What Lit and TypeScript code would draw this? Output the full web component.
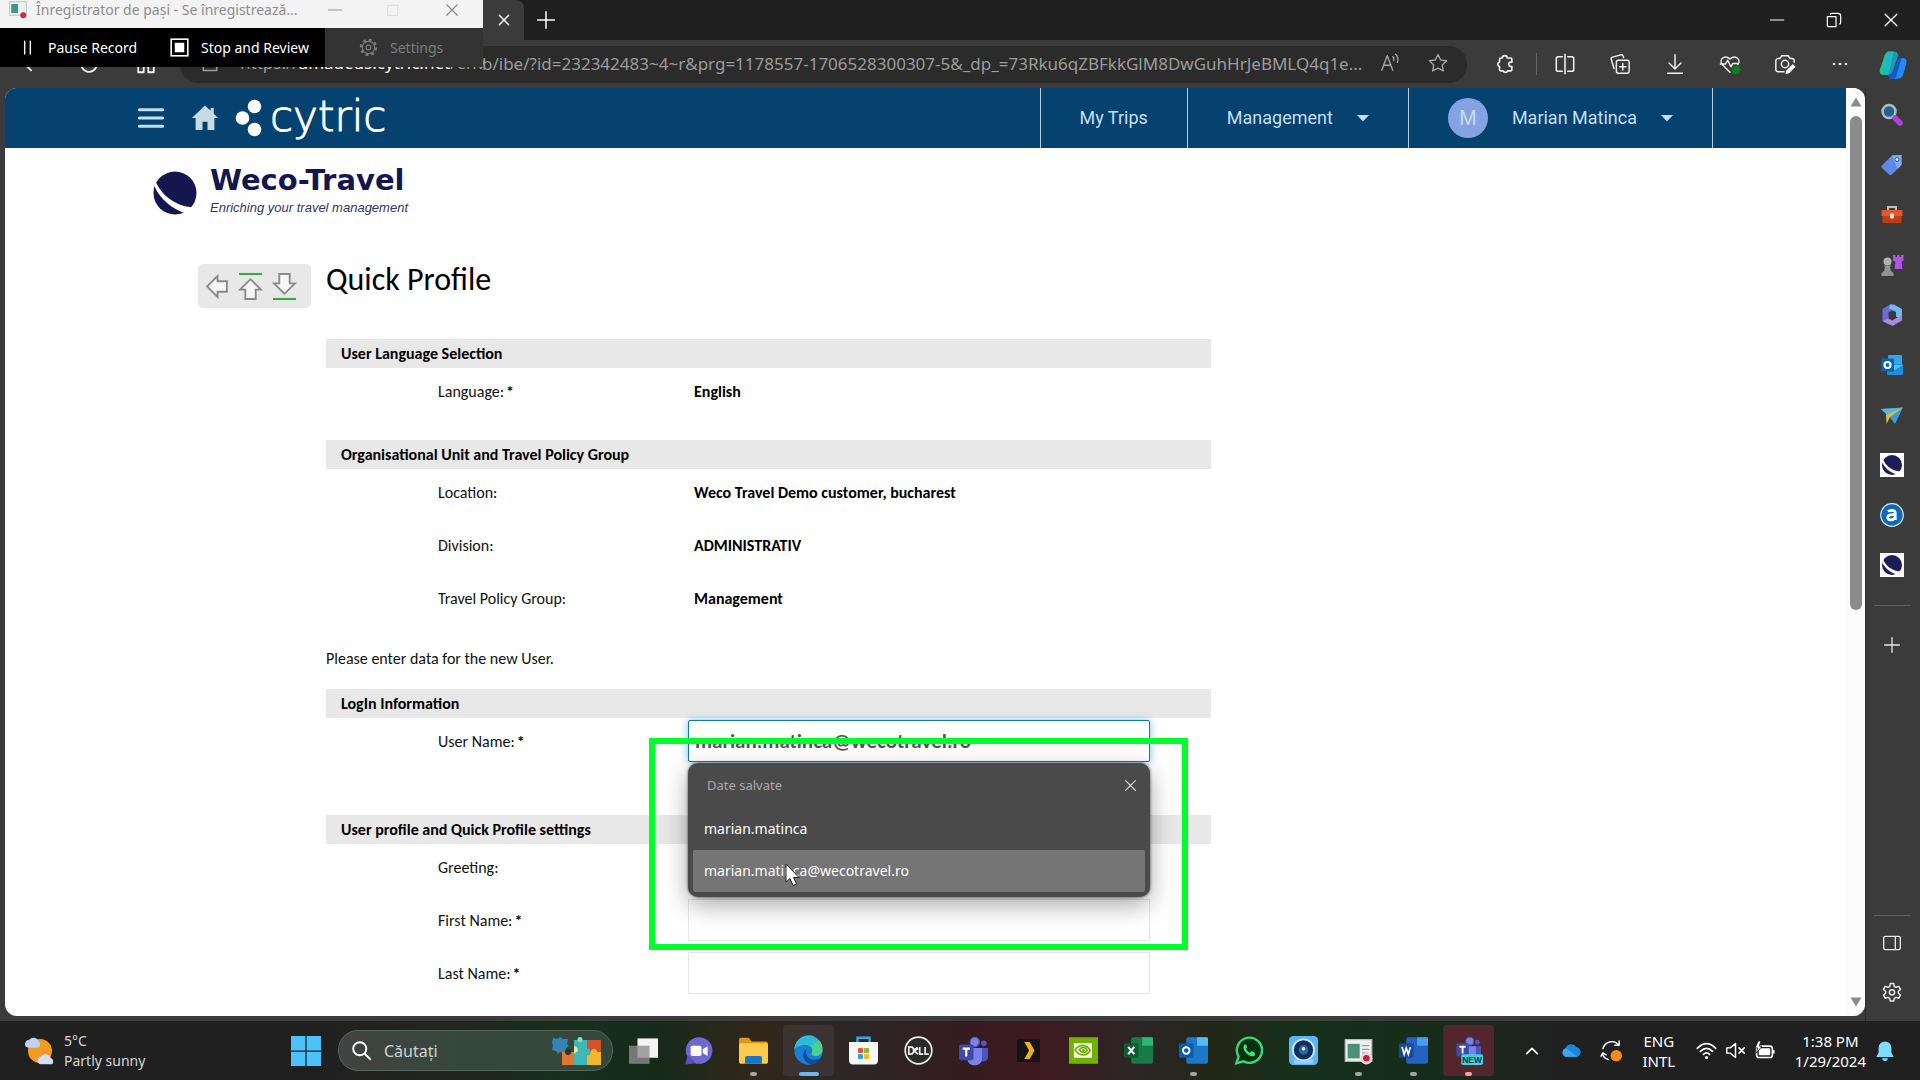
import { LitElement, html, css, svg, nothing } from "lit";
import type { TemplateResult } from "lit";
import { customElement } from "lit/decorators.js";
import { classMap } from "lit/directives/class-map.js";

type Shape = TemplateResult;

const icon = (size: number, shape: Shape, box = 24) =>
  html`<svg class="ico" width=${size} height=${size} viewBox="0 0 ${box} ${box}" aria-hidden="true">${shape}</svg>`;

const line = (d: string, w = 1.5) =>
  svg`<path d=${d} fill="none" stroke="currentColor" stroke-width=${w} stroke-linecap="round" stroke-linejoin="round"/>`;

const cross = line("M5 5L19 19M19 5L5 19", 1.6);
const gear = svg`${line("M10.3 2.5h3.4l.6 2.8 1.7 1 2.8-.9 1.7 3-2.1 1.9v2l2.1 1.9-1.7 3-2.8-.9-1.7 1-.6 2.8h-3.4l-.6-2.8-1.7-1-2.8.9-1.7-3 2.1-1.9v-2L3.5 8.400l1.700-3 2.800.9 1.700-1z", 1.5)}
  <circle cx="12" cy="11.300" r="2.600" fill="none" stroke="currentColor" stroke-width="1.500"/>`;
const gearFine = svg`<circle cx="12" cy="12" r="9.500" fill="none" stroke="currentColor" stroke-width="3" stroke-dasharray="3.700 3.760"/>
  <circle cx="12" cy="12" r="7.800" fill="none" stroke="currentColor" stroke-width="1.400"/>
  <circle cx="12" cy="12" r="3" fill="none" stroke="currentColor" stroke-width="1.400"/>`;

const globe = svg`<circle cx="22" cy="22" r="21.500" fill="#14164f"/>
  <path d="M2 9C8 24 22 35 40 36.500L35 43C19 39 6 27 0 13z" fill="#fff"/>
  <path d="M1.500 15C6 28 17 38 30 42C15 46 -2 34 1.500 15z" fill="#14164f"/>`;
const globeTile = svg`<rect width="24" height="24" fill="#fff"/><circle cx="12" cy="12" r="10" fill="#1b1c58"/>
  <path d="M2.500 5.500C6 13 12 18.500 21.500 18.500L18.500 22C11 20.500 4 14.500 1.500 8z" fill="#fff"/>`;

const glyphs = {
  readAloud: svg`${line("M3 20L9 4L15 20M5.300 14.500H12.700", 1.500)}${line("M15 5c1.500 1.200 1.500 3 1 4.500M18 2.500c3 2.500 3 6 2 9", 1.400)}`,
  star: line("M12 2.800L14.900 8.700L21.400 9.600L16.700 14.200L17.800 20.700L12 17.600L6.200 20.700L7.300 14.200L2.600 9.600L9.100 8.700Z"),
  puzzle: line("M9 5.500a2.700 2.700 0 0 1 5.400 0H18a1.500 1.500 0 0 1 1.500 1.500v3h-1a2.400 2.400 0 0 0 0 4.800h1V18a1.500 1.500 0 0 1-1.500 1.500h-3a2.700 2.700 0 0 1-5 0H7.500A1.500 1.500 0 0 1 6 18v-3.200a2.600 2.600 0 0 1 0-5V7a1.500 1.500 0 0 1 1.500-1.500z", 1.800),
  split: line("M12 1.500V22.500M9 4H4.500A2 2 0 0 0 2.500 6V18A2 2 0 0 0 4.500 20H9M15 4h4.500a2 2 0 0 1 2 2V18a2 2 0 0 1-2 2H15", 1.700),
  collections: line("M10 8h10a2 2 0 0 1 2 2v10a2 2 0 0 1-2 2H10a2 2 0 0 1-2-2V10a2 2 0 0 1 2-2zM15 11.500v7M11.500 15h7M5.500 17L2.500 7A2 2 0 0 1 3.800 4.500L13 2a2 2 0 0 1 2.400 1.400L16 5", 1.600),
  download: line("M12 2V17M5.500 11L12 17.500L18.500 11M4 22H20", 1.600),
  heart: svg`${line("M12 21L3.500 12.500C-.5 8 5.500 1 12 6.500C18.500 1 24.500 8 20.500 12.500M1.500 12H7L9.500 8L13 15L15 11.500H20", 1.600)}<circle cx="18.500" cy="18.500" r="5" fill="#0f7b1f"/>`,
  camera: svg`${line("M11 20.500H4.500A2.500 2.500 0 0 1 2 18V8.500A2.500 2.500 0 0 1 4.500 6H6.500L8.500 3h7l2 3h2A2.500 2.500 0 0 1 22 8.500V10", 1.600)}<circle cx="12" cy="12" r="4" fill="none" stroke="currentColor" stroke-width="1.600"/><path d="M12.500 23l1-4 7-7 3 3-7 7z" fill="#fff"/>`,
  dots: svg`<circle cx="4" cy="12" r="1.800" fill="currentColor"/><circle cx="12" cy="12" r="1.800" fill="currentColor"/><circle cx="20" cy="12" r="1.800" fill="currentColor"/>`,
  copilot: svg`<path d="M13 2h-3C7 2 6 4 5 8L2.500 15C1.500 18 2.500 20 5 20H9z" fill="#25c48e"/><path d="M8 2h5c2 0 3 1 3.500 3L13 15c-1 3.500-2 5-4 5H5z" fill="#19b5dc" opacity=".75"/><path d="M17 7h3c2.500 0 3.500 2 2.500 5l-2 7c-1 3-2 4-5 4h-4c-1.500 0-2.500-1-3-3h1c2 0 3-1.500 4-5z" fill="#2589f5"/><path d="M17 7h2l-4 14c-1 2-2 2-3.500 2-1.500 0-2.500-1-3-3h1c2 0 3-1.500 4-5z" fill="#1556c9"/>`,
  back: line("M20 12H4M11 5L4 12L11 19", 2),
  refresh: line("M20.500 12a8.500 8.500 0 1 1-2.500-6M18.500 2v4.500H14", 2),
  home: line("M3.500 10L12 3l8.500 7V21H14.500V14.500H9.500V21H3.500z", 2),
  lock: line("M4 10H20V21H4zM8 10V7a4 4 0 0 1 8 0v3", 1.800),
};

const sideIcons: { label: string; shape: Shape }[] = [
  { label: "Search", shape: svg`<circle cx="9" cy="8.500" r="6.500" fill="#26618c" stroke="#a9bfc4" stroke-width="2.500"/><path d="M15 15l5 5" stroke="#b13fe0" stroke-width="5.500" stroke-linecap="round"/>` },
  { label: "Shopping", shape: svg`<path d="M2 12.500L12 2.500l9.500-.5v10L12 21.500c-1 .8-2 .8-3 0L2 15c-1-1-1-1.500 0-2.500z" fill="#5b8ae8"/><path d="M12 2.500l9.500-.5v10l-4 4z" fill="#83abef"/><circle cx="17" cy="6.500" r="2" fill="#d9ecff" stroke="#35538a"/>` },
  { label: "Tools", shape: svg`<path d="M8 7V4h8v3" fill="none" stroke="#b7c0c4" stroke-width="2"/><path d="M1.500 7h21v6h-21z" fill="#e2582a"/><path d="M2.500 13h19v7h-19z" fill="#c23c13"/><rect x="10" y="10.500" width="4" height="5" rx="1" fill="#e3e3e3"/>` },
  { label: "Games", shape: svg`<path d="M13 2h2.500v2H17V2h2.500v2H21V2h2.500v5.500l-2 1.500 1 7h-8l1-7-2.500-1.500z" fill="#b053e8"/><circle cx="7.500" cy="8.500" r="4" fill="#b0b0b0"/><path d="M3.500 12.500h8l-1.500 1.500 1 4 2.500 2v3H1.500v-3l2.500-2 1-4z" fill="#929292"/>` },
  { label: "Microsoft 365", shape: svg`<path d="M11 1L2.500 6v12l6 3.500V9.500l7-4z" fill="#6c6bdc"/><path d="M10 1.500h4l8 4.500v11l-6-3.500V9L9 5.500z" fill="#71b8ec"/><path d="M8.500 15.500l3.500 2L22 12v5.500l-9.500 5.500L2.500 18z" fill="#a78bd9"/>` },
  { label: "Outlook", shape: svg`<rect x="8" y="2" width="14" height="10" rx="1" fill="#35a5ea"/><rect x="7" y="11" width="16" height="11" rx="1" fill="#1e8fd8"/><path d="M23 12l-8 5-8-5" fill="#52c1f3"/><rect x="1" y="5.500" width="13" height="13" rx="1.500" fill="#0a62b8"/><circle cx="7.500" cy="12" r="3" fill="none" stroke="#fff" stroke-width="2.200"/>` },
  { label: "Drop", shape: svg`<path d="M1 6L23 4.500 15 21 9.500 14z" fill="#3c9ade"/><path d="M1 6L23 4.500 7 12z" fill="#55b6d9"/><path d="M6 12L23 4.500 10 14 6.500 21z" fill="#e8b637"/>` },
  { label: "Weco Travel", shape: globeTile },
  { label: "Amadeus", shape: svg`<circle cx="12" cy="12" r="11.300" fill="#0e69b8" stroke="#d8ecfa" stroke-width="1.200"/><path d="M8 8.500c2-1.800 7.300-1.800 7.300 1.500V17M15 11.800c-4-.5-7.300.2-7.300 2.600 0 3.200 5.500 3.200 7.300.4" fill="none" stroke="#fff" stroke-width="2.700"/>` },
  { label: "Weco Travel 2", shape: globeTile },
];

interface Task { label: string; shape: Shape; run?: "dot" | "wide" | "red"; lit?: "edge" | "teams" }
const teamsBody = svg`<circle cx="13" cy="5" r="3.800" fill="#7b83eb" stroke="#5059c9"/><circle cx="20.500" cy="6" r="2.300" fill="#5059c9"/><path d="M16 10h8v7c0 5-6 5-8 2z" fill="#4b53bc"/><path d="M6 10h13v9c0 7-12 7-12 0z" fill="#7b83eb"/><rect x="0" y="7" width="12" height="13" rx="1.500" fill="#4048a8"/><path d="M3 10.500h6M6 10.500V17" stroke="#fff" stroke-width="1.800"/>`;
const office = (main: string, light: string, badge: string, mark: Shape) =>
  svg`<rect x="6" y="1" width="18" height="22" rx="1.500" fill=${main}/><path d="M15 1h8q1 0 1 1v6h-9z" fill=${light}/><rect x="0" y="6" width="12" height="12" rx="1.200" fill=${badge}/>${mark}`;
const tasks: Task[] = [
  { label: "Task view", shape: svg`<rect x="7" y="2" width="17" height="16" fill="#f4f4f4"/><rect x="0" y="8" width="17" height="15" fill="#8d8d8d" opacity=".8"/>` },
  { label: "Chat", shape: svg`<circle cx="12.500" cy="12" r="11" fill="#7068cf"/><path d="M1 23.500l2-8 7 7z" fill="#5a50b8"/><rect x="5.500" y="8" width="9" height="8.500" rx="1.500" fill="#fff"/><path d="M15.500 11l4-2.500v8l-4-2.500z" fill="#fff"/>` },
  { label: "File Explorer", run: "dot", shape: svg`<path d="M0 3q0-1.500 1.500-1.500H8l2.500 3H22q2 0 2 2V10H0z" fill="#d99a1c"/><rect x="0" y="6" width="24" height="17" rx="1.500" fill="#fccb4b"/><path d="M5 23v-5q0-1.500 1.500-1.500h11q1.500 0 1.500 1.500v5z" fill="#1a74c8"/>` },
  { label: "Edge", run: "wide", lit: "edge", shape: svg`<circle cx="12" cy="12" r="11.700" fill="#1a7fd4"/><path d="M.4 10.500C2-3.500 22-3 23.600 9.500c.6 5-2.600 7.500-6.600 7-2.500-.3-3-1.700-2-3.500C16.500 8 8 4.500.4 10.500z" fill="#4fcf8e"/><path d="M.4 10.500C2-2 17-3.500 20 4c-1.500 2-4 3-6.500 4C10 6 4.500 6.500.4 10.500z" fill="#2cb9dc"/><path d="M9 11.500C5.500 16 9 23.500 15 23.300c3.500-.2 6.500-2.800 7.500-5.300-6.500 3.500-13.500.5-12.500-6 0-.8-.5-1-1-.5z" fill="#0d4f9e"/>` },
  { label: "Store", shape: svg`<path d="M7 5V1.500h10V5" fill="none" stroke="#35a9e8" stroke-width="2"/><path d="M0 5h24v15q0 3.500-3.500 3.500h-17Q0 23.500 0 20z" fill="#f7f7f7"/><path d="M7.500 10h4v4h-4z" fill="#e8502b"/><path d="M12.500 10h4v4h-4z" fill="#7db928"/><path d="M7.500 15h4v4h-4z" fill="#2a9fe0"/><path d="M12.500 15h4v4h-4z" fill="#f8b917"/>` },
  { label: "Dell", shape: svg`<circle cx="12" cy="12" r="11" fill="#2a2a2a" stroke="#f0f0f0" stroke-width="1.400"/><path d="M4 9v6h1.300Q8 15 8 12T5.300 9zM11.300 9.500L8.600 11.300v1.200l3 2.500M9 12l2.700-1.600M13 9v6h3M17.500 9v6H20.500" fill="none" stroke="#f0f0f0" stroke-width="1.400"/>` },
  { label: "Teams", shape: teamsBody },
  { label: "Plex", shape: svg`<rect x="2.500" y="2.500" width="19" height="19" fill="#141414"/><path d="M8.500 5h4.500l4 7-4 7H8.500l4-7z" fill="#f2b01e"/>` },
  { label: "NVIDIA", shape: svg`<rect x="0" y="1" width="24" height="22" fill="#74b000"/><rect x="4" y="6" width="15" height="12" fill="#f3f7ea"/><path d="M5 11.500c3.500-5 9.500-5 12.500.5-3 5-9 5-12.500-.5zM8.500 11.500c2-3 5.500-2.500 6.500.5-1.500 2.500-5 2-6.500-.5z" fill="none" stroke="#74b000" stroke-width="1.400"/><circle cx="12" cy="12" r="1.200" fill="#74b000"/>` },
  { label: "Excel", shape: office("#1a7a47", "#2fb573", "#0f5c33", svg`<path d="M3.500 9l5 6M8.500 9l-5 6" stroke="#fff" stroke-width="1.700"/>`) },
  { label: "Outlook", run: "dot", shape: office("#1c78c8", "#55bdf2", "#0d5bab", svg`<circle cx="6" cy="12" r="2.700" fill="none" stroke="#fff" stroke-width="1.600"/>`) },
  { label: "WhatsApp", shape: svg`<path d="M2 22.500l1.800-5.500A10.400 10.400 0 1 1 8 21z" fill="#07320f" stroke="#3fd374" stroke-width="2"/><path d="M8.500 7c-3 4 4 11.500 8.500 9.500l.5-2.500-3-1.500-1.300 1.300c-1-.3-3-2.300-3.300-3.300L11 9.300 10 7z" fill="#49de80"/>` },
  { label: "Assistant", shape: svg`<rect width="24" height="24" rx="3.500" fill="#5ab4f6"/><circle cx="12" cy="11.500" r="9.500" fill="#cfe8ff"/><circle cx="12" cy="11.500" r="8" fill="#102f5a"/><circle cx="12" cy="11.500" r="4" fill="#2b649e"/><circle cx="12" cy="10.500" r="1.500" fill="#dff0ff"/><path d="M4 19q8 3.500 16 0v4H4z" fill="#8ed0ff"/>` },
  { label: "Steps Recorder", run: "dot", shape: svg`<rect x="1" y="3" width="22" height="18" fill="#efefef" stroke="#b9b9b9"/><rect x="3" y="6.500" width="10" height="12" fill="#4a8f77"/><path d="M15 8h6M15 11h6M15 14h5" stroke="#9a9a9a"/><circle cx="18.500" cy="18.500" r="5" fill="#f2d7da"/><circle cx="18.500" cy="18.500" r="2.700" fill="#cb1d35"/>` },
  { label: "Word", run: "dot", shape: office("#2362c0", "#4a9ced", "#174a9c", svg`<path d="M2.500 9l1.800 6L6 10l1.700 5 1.800-6" fill="none" stroke="#fff" stroke-width="1.400"/>`) },
  { label: "Teams new", run: "red", lit: "teams", shape: svg`<g transform="translate(2 0) scale(.85)">${teamsBody}</g><rect x="6" y="15" width="18" height="9" rx="1.500" fill="#3fd2e0"/><text x="15" y="22.300" class="newtag">NEW</text>` },
];

interface Section { title: string; rows: { label: string; req?: boolean; value?: string; field?: string }[] }
const sections: Section[] = [
  { title: "User Language Selection", rows: [{ label: "Language:", req: true, value: "English" }] },
  { title: "Organisational Unit and Travel Policy Group", rows: [
    { label: "Location:", value: "Weco Travel Demo customer, bucharest" },
    { label: "Division:", value: "ADMINISTRATIV" },
    { label: "Travel Policy Group:", value: "Management" },
  ] },
  { title: "LogIn Information", rows: [{ label: "User Name:", req: true, field: "user" }] },
  { title: "User profile and Quick Profile settings", rows: [
    { label: "Greeting:", field: "greeting" },
    { label: "First Name:", req: true, field: "first" },
    { label: "Last Name:", req: true, field: "last" },
  ] },
];

@customElement("app-root")
export class AppRoot extends LitElement {
  static styles = css`
    :host { display: block; --ui: "Noto Sans", "Open Sans", sans-serif; --form: Carlito, Lato, sans-serif; }
    * { box-sizing: border-box; }
    button, input, select { font: inherit; color: inherit; border: 0; background: none; padding: 0; margin: 0; }
    a { color: inherit; text-decoration: none; }
    .ico { display: block; flex: none; overflow: visible; }
    .desk { position: relative; display: grid; grid-template-rows: 40px 48px minmax(0, 1fr) auto; height: 100vh; overflow: hidden; background: #3b3b3b; color: #e8e8e8; font: 16px/20px var(--ui); }
    .ib { display: grid; place-items: center; flex: none; }

    .tabs { display: flex; align-items: stretch; background: #1f1f1f; }
    .tab { width: 524px; padding-right: 12px; display: flex; align-items: center; justify-content: flex-end; background: #3b3b3b; border-radius: 0 8px 0 0; color: #fff; }
    .newtab { width: 44px; color: #fff; }
    .winctl { margin-left: auto; display: flex; padding-right: 1px; color: #fff; }
    .winctl .ib { width: 57px; }

    .tools { display: flex; align-items: center; color: #f0f0f0; }
    .nav { display: flex; width: 180px; padding-left: 3px; }
    .nav .ib { width: 57px; }
    .address { flex: 1; display: flex; align-items: center; height: 37px; padding: 0 5px 2px 20px; border-radius: 18px; background: #2b2b2b; color: #9c9c9c; font-size: 17px; }
    .host { width: 262px; padding-left: 20px; white-space: nowrap; flex: none; }
    .host b { font-weight: 400; color: #fff; }
    .url { flex: 1; min-width: 0; text-overflow: ellipsis; height: 30px; }
    .address .ib { width: 48px; color: #a5a5a5; }
    .exts { display: flex; align-items: center; padding-left: 10px; }
    .exts .ib { width: 55px; }
    .exts .vr { width: 1px; height: 22px; margin: 0 0 0 4px; background: #666; }
    .exts .cop { width: 53px; padding-right: 2px; }

    .mid { display: flex; min-height: 0; padding-left: 5px; }
    .page { flex: 1; min-width: 0; display: flex; margin-bottom: 5px; background: #fff; border-radius: 12px; overflow: hidden; }
    .doc { flex: 1; min-width: 0; color: #111; overflow: hidden; }
    .bar { width: 19px; display: flex; flex-direction: column; align-items: center; justify-content: space-between; padding: 8px 0; background: #fcfcfc; color: #8b8b8b; }
    .thumb { width: 12px; height: 494px; margin-top: 8px; border-radius: 6px; background: #8b8b8b; }
    .bar .down { margin-top: auto; }

    .top { display: flex; height: 60px; padding-left: 132px; background: #05426f; color: #c4dff0; font: 18px/24px Roboto, sans-serif; }
    .brand { display: flex; align-items: center; }
    .brand .ib { width: 28px; height: 40px; }
    .brand .house { margin-left: 25px; width: 30px; }
    .cytric { display: flex; align-items: center; gap: 7px; margin-left: 15px; color: #fff; font: 200 42px/48px "DejaVu Sans", sans-serif; -webkit-text-stroke: 1px #fff; }
    .cytric span { padding-bottom: 2px; }
    .menu { display: flex; margin-left: auto; padding-right: 133px; }
    .menu a, .menu button { display: flex; align-items: center; border-left: 1px solid #b9ccda; padding: 0 39px; }
    .menu button { gap: 24px; }
    .menu .who { border-right: 1px solid #b9ccda; }
    .ava { display: grid; place-items: center; width: 40px; height: 40px; border-radius: 50%; background: #85a3e3; color: #c6dcf3; font-size: 20px; }

    .logo { display: flex; align-items: center; gap: 13px; height: 69px; padding: 20px 0 0 148px; color: #14164f; }
    .logo strong { display: block; font: 700 29px/30px "DejaVu Sans", sans-serif; }
    .logo em { display: block; font: italic 13px/26px "Liberation Sans", sans-serif; color: #33345f; }

    .sheet { display: flex; align-items: flex-start; gap: 15px; padding: 47px 20px 0 193px; }
    .jump { display: flex; flex: none; align-items: center; gap: 9px; width: 113px; height: 44px; padding-left: 6px; border-radius: 5px; background: #e8e8e8; }
    form { position: relative; flex: 1; max-width: 885px; font: 16px/20px var(--form); }
    h1 { margin: 0; height: 75px; font: 400 32px/32px var(--form); color: #000; }
    h2 { margin: 0; height: 29px; padding: 0 0 0 15px; background: #e8e8e8; font: 700 16px/29px var(--form); color: #000; }
    .sec { padding-bottom: 19px; }
    .sec.s1 { padding-bottom: 0; }
    .sec.s2 { padding-bottom: 44px; }
    .note { margin: 0; height: 61px; line-height: 61px; }
    .row { display: grid; grid-template-columns: 250px 1fr; height: 53px; padding: 2px 61px 0 112px; align-items: start; }
    .row label, .row .lab { padding-top: 12px; }
    .row .val { padding: 12px 0 0 6px; font-weight: 700; color: #000; }
    .row b { margin-left: 2px; }
    .cell { position: relative; }
    .box { display: block; width: 100%; height: 42px; padding: 0 6px; border: 1px solid #e6e6e6; background: #fff; font-size: 21px; }
    .box.on { border: 1px solid #1477a8; border-radius: 2px; box-shadow: 0 0 8px #7cc0e4; font-weight: 700; color: #555; outline: none; }
    .pop { position: absolute; z-index: 2; left: 0; right: 0; top: 43px; padding: 5px; border-radius: 10px; background: #4a4a4a; color: #fff; box-shadow: 0 8px 24px rgba(0, 0, 0, .35), 0 0 3px #555; font: 14px/20px var(--ui); }
    .pop header { display: flex; justify-content: space-between; align-items: center; height: 40px; padding: 0 6px 6px 14px; color: #a9a9a9; font-size: 13px; }
    .pop header button { color: #e6e6e6; }
    .opt { display: block; width: 100%; height: 42px; padding-left: 11px; text-align: left; }
    .opt.sel { background: #757575; border-radius: 2px; }
    .frame { position: absolute; z-index: 3; left: -39px; right: -38px; top: 18px; height: 212px; border: 6px solid #00ff2b; pointer-events: none; }
    .mouse { position: absolute; z-index: 4; left: 97px; top: 143px; }

    .side { width: 55px; display: flex; flex-direction: column; align-items: center; padding: 2px 2px 3px 0; border-left: 1px solid #2e2e2e; }
    .side .ib { height: 50px; width: 48px; }
    .side hr { width: 37px; margin: 15px 0 14px; border: 0; border-top: 1px solid #606060; }
    .side .gap { flex: 1; }
    .side hr.low { margin: 0 0 2px; }

    .task { display: grid; grid-template-columns: 287px 1fr auto; align-items: center; height: 59px; background: linear-gradient(90deg, #202020 20%, #22251f 27%, #16301c 35%, #172a1a 40%, #33261a 46%, #2b2727 51%, #341d1f 58%, #3e1a1f 63%, #2b2627 69%, #242718 73%, #14301a 79%, #172c1b 87%, #202020 94%); background-size: 1650px 100%; background-repeat: no-repeat; background-color: #202020; color: #fff; }
    .wx { display: flex; align-items: center; gap: 8px; padding-left: 24px; font-size: 14px; text-align: left; }
    .wx span { display: block; color: #d6d6d6; }
    .apps { display: flex; align-items: center; }
    .start { width: 38px; }
    .find { display: flex; align-items: center; width: 275px; height: 41px; margin: 0 3px 0 13px; padding: 0 8px 0 12px; gap: 12px; border: 1px solid #56665a; border-radius: 20px; background: linear-gradient(90deg, #424242, #36483c 45%, #33483a); }
    .find input { flex: 1; min-width: 0; font-size: 16px; height: 30px; outline: none; }
    .find input::placeholder { color: #d2d2d2; opacity: 1; }
    .app { position: relative; display: grid; place-items: center; width: 51px; height: 51px; margin: 0 2px; border-radius: 4px; }
    .app.edge { background: #3a3331; }
    .app.teams { background: #52262a; }
    .run { position: absolute; bottom: 0; width: 7px; height: 4px; border-radius: 2px; background: #a5a5a5; }
    .run.wide { width: 20px; background: #6bb7ea; }
    .run.red { background: #ff9c9c; }
    .newtag { font: 700 7px "Liberation Sans", sans-serif; fill: #0c2b40; text-anchor: middle; }
    .tray { display: flex; align-items: center; padding-right: 16px; font-size: 15px; text-align: right; }
    .tray .ib { width: 40px; height: 40px; }
    .tray .lang { width: 54px; text-align: center; }
    .quick { display: flex; gap: 8px; padding: 0 20px 0 10px; }
    .tray .bell { width: 38px; }
    .tray .time { white-space: nowrap; }

    .rec { position: absolute; z-index: 9; left: 0; top: 0; width: 483px; color: #fff; font-size: 14px; }
    .rec .cap { display: flex; height: 28px; padding: 0 22px 8px 9px; align-items: center; gap: 9px; background: #f3f3f3; color: #8d8d8d; }
    .rec .cap .t { flex: 1; white-space: nowrap; }
    .rec .ctl { display: flex; gap: 42px; }
    .acts { display: grid; grid-template-columns: 151px 174px 1fr; height: 39px; background: #000; }
    .acts button { display: flex; align-items: center; gap: 12px; padding-left: 19px; white-space: nowrap; }
    .acts .set { background: #333; color: #7d7d7d; padding-left: 34px; gap: 12px; }
  `;

  private tool(label: string, shape: Shape, size = 22, cls = "") {
    return html`<button class="ib ${cls}" aria-label=${label}>${icon(size, shape)}</button>`;
  }

  private recorder() {
    return html`<section class="rec">
      <div class="cap">
        ${icon(18, svg`<rect x="1" y="1" width="22" height="18" fill="#e9f2f0" stroke="#a8b5b5"/><rect x="3" y="4" width="9" height="12" fill="#3f9783"/><circle cx="19" cy="19" r="4" fill="#d4283c"/>`)}
        <span class="t">Înregistrator de pași - Se înregistrează...</span>
        <span class="ctl">
          <button aria-label="Minimize recorder">${icon(16, line("M2 12H22", 1.4))}</button>
          <button aria-label="Maximize recorder" disabled>${icon(16, svg`<rect x="4" y="5" width="15" height="15" fill="none" stroke="#dcdcdc" stroke-width="1.500"/>`)}</button>
          <button aria-label="Close recorder">${icon(18, cross)}</button>
        </span>
      </div>
      <div class="acts">
        <button>${icon(17, line("M8 3V21M16 3V21", 2))}Pause Record</button>
        <button>${icon(19, svg`<rect x="1.500" y="1.500" width="21" height="21" fill="none" stroke="#fff" stroke-width="2"/><rect x="6" y="6" width="12" height="12" fill="#fff"/>`)}Stop and Review</button>
        <button class="set">${icon(19, gearFine)}Settings</button>
      </div>
    </section>`;
  }

  private field(kind: string) {
    if (kind === "greeting")
      return html`<select class="box" id="greeting"><option></option><option>Mr</option><option>Ms</option></select>`;
    if (kind !== "user") return html`<input class="box" id=${kind} type="text" />`;
    return html`
      <input class="box on" id="user" type="text" .value=${"marian.matinca@wecotravel.ro"} />
      <div class="pop">
        <header>Date salvate<button type="button" aria-label="Close suggestions">${icon(17, cross)}</button></header>
        <button type="button" class="opt">marian.matinca</button>
        <button type="button" class="opt sel">marian.matinca@wecotravel.ro</button>
      </div>
      <div class="frame"></div>
      <svg class="mouse" width="15" height="24" viewBox="0 0 15 24" aria-hidden="true"><path d="M1 1V19L5 15.500L8 22.500L11.500 21L8.500 14.500H14Z" fill="#fff" stroke="#222"/></svg>`;
  }

  private section(s: Section, i: number) {
    return html`${i === 2 ? html`<p class="note">Please enter data for the new User.</p>` : nothing}
      <div class="sec s${i}">
        <h2>${s.title}</h2>
        ${s.rows.map((r) => html`<div class="row">
          ${r.field
            ? html`<label for=${r.field}>${r.label}${r.req ? html`<b>*</b>` : nothing}</label><div class="cell">${this.field(r.field)}</div>`
            : html`<span class="lab">${r.label}${r.req ? html`<b>*</b>` : nothing}</span><span class="val">${r.value}</span>`}
        </div>`)}
      </div>`;
  }

  private document() {
    const caret = icon(12, svg`<path d="M0 6h24L12 19z" fill="currentColor"/>`);
    const arrow = "M12 3L22 13H17V22H7V13H2Z";
    const outline = (rot: number, dy = 0) => svg`<path d=${arrow} transform="translate(0 ${dy}) rotate(${rot} 12 12)" fill="#f6f6f6" stroke="#8a8a8a" stroke-width="1.800"/>`;
    return html`<main class="doc">
      <header class="top">
        <div class="brand">
          <button class="ib" aria-label="Menu">${icon(28, line("M2 5H22M2 12H22M2 19H22", 2.6))}</button>
          <a href="#" class="ib house" aria-label="Home">${icon(30, svg`<path d="M12 2L1.500 12H4.500V21.500H10V15H14V21.500H19.500V12H22.500L19 8.500V4H16.500V6.200Z" fill="#c8dbe2"/>`)}</a>
          <a href="#" class="cytric">
            <svg width="28" height="38" viewBox="0 0 28 38" aria-hidden="true"><circle cx="19.500" cy="7.500" r="6.800" fill="#fff"/><circle cx="7.500" cy="19" r="6.800" fill="#fff"/><circle cx="19.500" cy="30.500" r="6.800" fill="#fff"/></svg>
            <span>cytric</span>
          </a>
        </div>
        <nav class="menu">
          <a href="#">My Trips</a>
          <button>Management ${caret}</button>
          <button class="who"><span class="ava">M</span>Marian Matinca ${caret}</button>
        </nav>
      </header>
      <div class="logo">
        ${icon(44, globe, 44)}
        <div><strong>Weco-Travel</strong><em>Enriching your travel management</em></div>
      </div>
      <div class="sheet">
        <div class="jump">
          <button aria-label="Back">${icon(25, outline(-90))}</button>
          <button aria-label="To top">${icon(25, svg`${outline(0, 2)}<path d="M1 0H23" stroke="#3aa648" stroke-width="2"/>`)}</button>
          <button aria-label="To bottom">${icon(25, svg`${outline(180, -2)}<path d="M1 24H23" stroke="#3aa648" stroke-width="2"/>`)}</button>
        </div>
        <form @submit=${(e: Event) => e.preventDefault()}>
          <h1>Quick Profile</h1>
          ${sections.map((s, i) => this.section(s, i))}
        </form>
      </div>
    </main>`;
  }

  private taskbar() {
    return html`<footer class="task">
      <button class="wx">
        ${icon(32, svg`<circle cx="12" cy="12" r="9" fill="#f39a22"/><path d="M1 8.500a3.500 3.500 0 0 1 3-5 4 4 0 0 1 7 1.500 2.500 2.500 0 0 1-1 4.500H3z" fill="#bcd3f7"/><path d="M12 22a3.200 3.200 0 0 1 1-6 4 4 0 0 1 7 1 3 3 0 0 1 1 5z" fill="#d3dcfb"/>`)}
        <span>5°C<span>Partly sunny</span></span>
      </button>
      <div class="apps">
        <button class="ib start" aria-label="Start">${icon(30, svg`<path d="M0 0h11.500v11.500H0zM12.500 0H24v11.500H12.500zM0 12.500h11.500V24H0zM12.500 12.500H24V24H12.500z" fill="#4cc2fb"/>`)}</button>
        <div class="find">
          ${icon(21, line("M16 16L22 22M10 2.500a7.500 7.500 0 1 1 0 15a7.500 7.500 0 0 1 0-15z", 2.2))}
          <input type="search" aria-label="Căutați" placeholder="Căutați" />
          <svg width="52" height="30" viewBox="0 0 52 30" aria-hidden="true"><path d="M1 2l5 1 2-2 3 2 5 0-1 5 2 2-3 2-1 5-5-1-2 2-2-3-4-1 1-5-1-2z" fill="#3584b5"/><rect x="10" y="16" width="13" height="13" fill="#e0762f"/><path d="M22 4h13v25H22z" fill="#3fb8b5"/><path d="M35 4h14v13H35z" fill="#d8502a"/><path d="M35 16h14v13H35z" fill="#f4b62c"/><path d="M22 10a5 5 0 0 1 4 5l-4 3z" fill="#e9e1b8"/><circle cx="35" cy="16" r="3.500" fill="#3fb8b5"/><circle cx="42" cy="16" r="3" fill="#f4b62c"/><circle cx="28" cy="3.500" r="2.500" fill="#8edad2"/><circle cx="16" cy="16" r="3" fill="#1e3a2c"/></svg>
        </div>
        ${tasks.map((t) => html`<button class=${classMap({ app: true, edge: t.lit === "edge", teams: t.lit === "teams" })} aria-label=${t.label}>
          ${icon(29, t.shape)}${t.run ? html`<i class=${classMap({ run: true, wide: t.run === "wide", red: t.run === "red" })}></i>` : nothing}
        </button>`)}
      </div>
      <div class="tray">
        <button class="ib" aria-label="Hidden icons">${icon(16, line("M4 16L12 8L20 16", 2.6))}</button>
        <button class="ib" aria-label="OneDrive">${icon(21, svg`<path d="M5 19a5 5 0 0 1 0-9.500A7 7 0 0 1 17.500 8 5.800 5.800 0 0 1 19 19z" fill="#1a86dc"/><path d="M5 19a5 5 0 0 1 1-9.500L19 19z" fill="#3ca7f0"/>`)}</button>
        <button class="ib" aria-label="Update">${icon(23, svg`${line("M3 10C5 3 14 0 19.500 6M20 2V6.500H15.500M9 21.500C5 20.500 3 17.500 2.500 15M1 18l2-3.500 3.500 2", 1.5)}<circle cx="17" cy="17.500" r="6" fill="#f28c1b"/>`)}</button>
        <button class="lang">ENG<br />INTL</button>
        <button class="quick" aria-label="Network, volume and battery">
          ${icon(21, svg`${line("M1.500 9.500Q12-1 22.500 9.500M5 13Q12 6 19 13M8.500 16.500Q12 13 15.500 16.500", 1.9)}<circle cx="12" cy="20" r="1.800" fill="currentColor"/>`)}
          ${icon(21, line("M2 9H6L12 4V20L6 15H2ZM16 9L22 15M22 9L16 15", 1.7))}
          ${icon(21, svg`<rect x="3" y="7" width="18" height="13" rx="3" fill="none" stroke="#fff" stroke-width="1.800"/><rect x="5.500" y="9.500" width="13" height="8" rx="1" fill="#fff"/><path d="M22.500 11.500v4" stroke="#fff" stroke-width="2"/><path d="M5 1L1 9h3l-1 6 6-8H6l2-6z" fill="#fff" stroke="#202020"/>`)}
        </button>
        <button class="time">1:38 PM<br />1/29/2024</button>
        <button class="ib bell" aria-label="Notifications">${icon(22, svg`<path d="M12 1.500a7 7 0 0 0-7 7V14L2.500 18.500h19L19 14V8.500a7 7 0 0 0-7-7zM9 20h6a3 3 0 0 1-6 0z" fill="#7fdcff"/>`)}</button>
      </div>
    </footer>`;
  }

  render() {
    return html`<div class="desk">
      <header class="tabs">
        <div class="tab"><button aria-label="Close tab">${icon(16, line("M5 5L19 19M19 5L5 19", 2.2))}</button></div>
        <button class="ib newtab" aria-label="New tab">${icon(20, line("M12 2V22M2 12H22", 1.8))}</button>
        <div class="winctl">
          <button class="ib" aria-label="Minimize">${icon(16, line("M2 12H22", 1.8))}</button>
          <button class="ib" aria-label="Restore">${icon(16, line("M2 7h13v15H4q-2 0-2-2zM7 3.500Q7 2 9 2h9q4 0 4 4v10q0 2-2 2", 1.8))}</button>
          <button class="ib" aria-label="Close">${icon(20, cross)}</button>
        </div>
      </header>
      <div class="tools">
        <div class="nav">
          ${this.tool("Back", glyphs.back)}${this.tool("Refresh", glyphs.refresh)}${this.tool("Home", glyphs.home)}
        </div>
        <div class="address">
          ${icon(20, glyphs.lock)}
          <span class="host">https://<b>amadeus.cytric.net</b>/env</span>
          <input class="url" aria-label="Address" readonly .value=${"b/ibe/?id=232342483~4~r&prg=1178557-1706528300307-5&_dp_=73Rku6qZBFkkGlM8DwGuhHrJeBMLQ4q1e..."} />
          ${this.tool("Read aloud", glyphs.readAloud)}${this.tool("Favourite", glyphs.star)}
        </div>
        <div class="exts">
          ${this.tool("Extensions", glyphs.puzzle)}<span class="vr"></span>
          ${this.tool("Split screen", glyphs.split)}${this.tool("Collections", glyphs.collections)}${this.tool("Downloads", glyphs.download)}
          ${this.tool("Browser essentials", glyphs.heart)}${this.tool("Screenshot", glyphs.camera)}${this.tool("More", glyphs.dots, 18)}
          ${this.tool("Copilot", glyphs.copilot, 31, "cop")}
        </div>
      </div>
      <div class="mid">
        <div class="page">
          ${this.document()}
          <div class="bar" aria-hidden="true">
            ${icon(12, svg`<path d="M12 3L23 21H1z" fill="currentColor"/>`)}
            <div class="thumb"></div>
            <span class="down">${icon(12, svg`<path d="M12 21L23 3H1z" fill="currentColor"/>`)}</span>
          </div>
        </div>
        <aside class="side">
          ${sideIcons.map((s) => this.tool(s.label, s.shape, 24))}
          <hr />
          ${this.tool("Add", line("M12 4V20M4 12H20", 1.4))}
          <div class="gap"></div>
          <hr class="low" />
          ${this.tool("Sidebar", line("M4 4H20Q22 4 22 6V18Q22 20 20 20H4Q2 20 2 18V6Q2 4 4 4ZM16 4V20", 1.6), 20)}
          ${this.tool("Settings", gear, 24)}
        </aside>
      </div>
      ${this.taskbar()}
      ${this.recorder()}
    </div>`;
  }
}
